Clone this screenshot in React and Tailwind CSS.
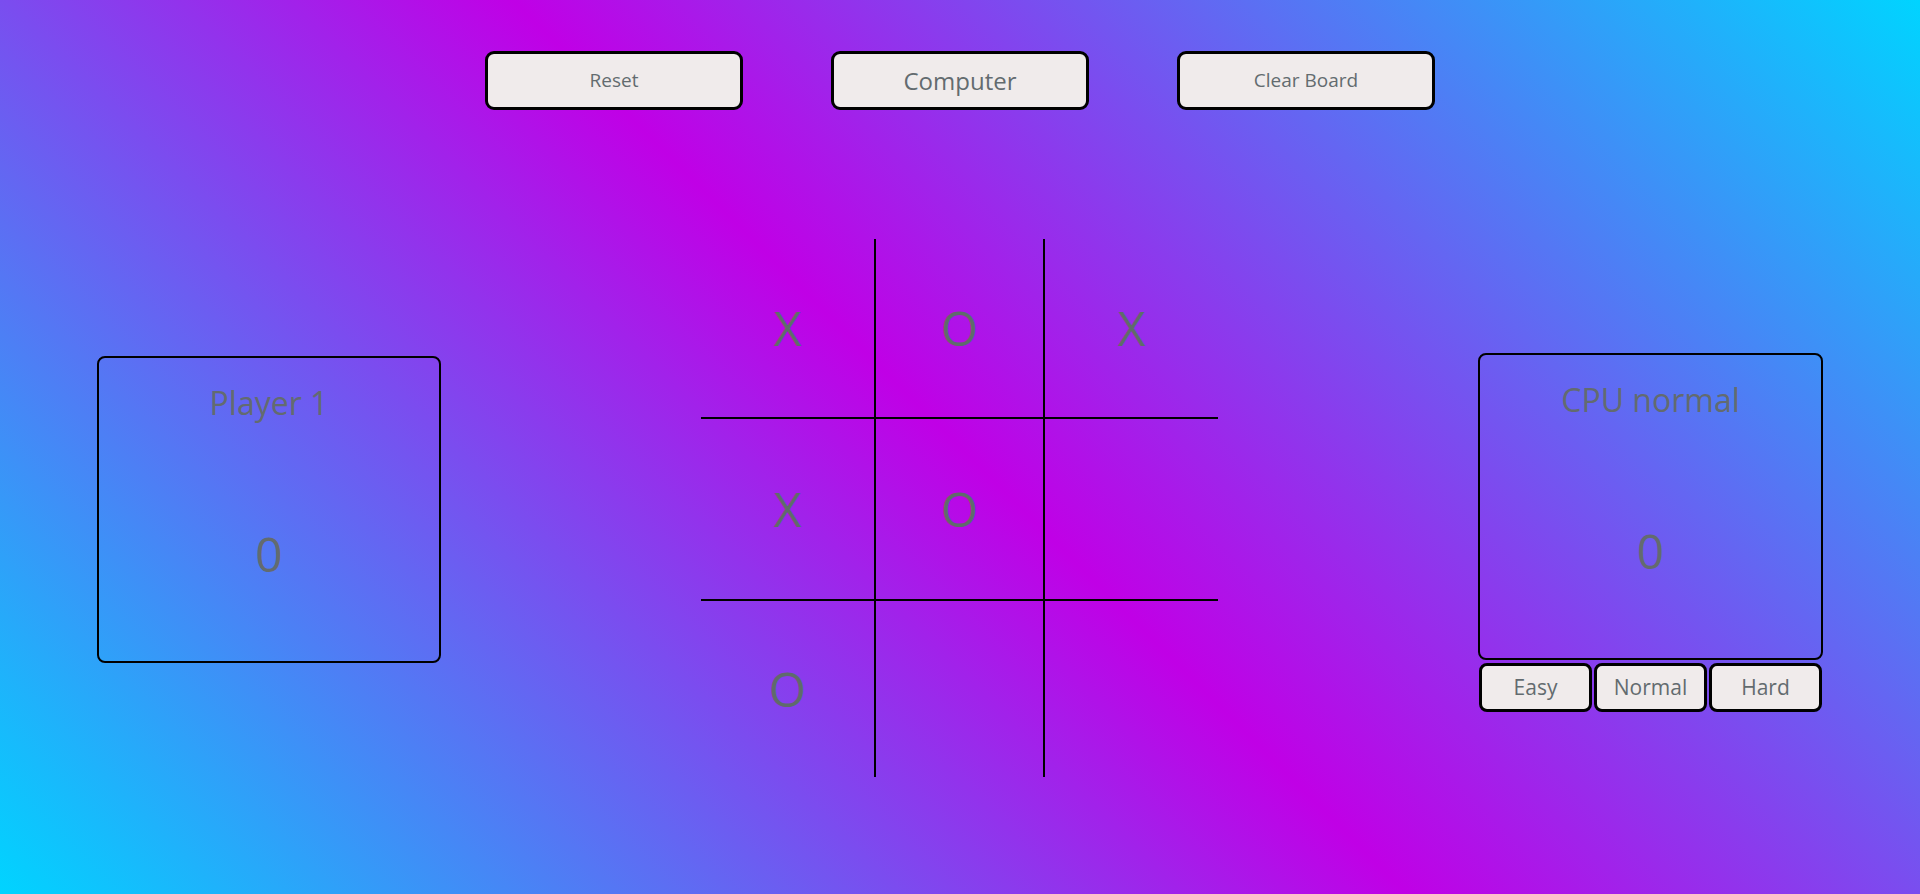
const board = [
  ["X", "O", "X"],
  ["X", "O", ""],
  ["O", "", ""],
]

function TopButton({ children, big }) {
  return (
    <button
      className={
        "w-[258px] h-[59px] rounded-[9px] border-[3px] border-black bg-[#f0ebeb] text-[#636b6f] " +
        (big ? "text-[24px]" : "text-[19px]")
      }
    >
      {children}
    </button>
  )
}

function ScoreBox({ title, score }) {
  return (
    <div className="flex flex-col items-center rounded-[8px] border-2 border-black h-[307px] pt-[26px] text-[#636b6f]">
      <div className="text-[32px] leading-[38px]">{title}</div>
      <div className="mt-[104px] text-[48px] leading-[56px]">{score}</div>
    </div>
  )
}

export default function App() {
  return (
    <div
      className="h-screen w-full overflow-hidden bg-[linear-gradient(45deg,#00d4ff_0%,#c000e6_50%,#00d4ff_100%)]"
      style={{ fontFamily: '"Open Sans", "Noto Sans", sans-serif' }}
    >
      <div className="flex justify-center gap-[88px] pt-[51px]">
        <TopButton>Reset</TopButton>
        <TopButton big>Computer</TopButton>
        <TopButton>Clear Board</TopButton>
      </div>

      <div className="flex items-start justify-between px-[97px] mt-[129px]">
        <div className="w-[344px] mt-[117px]">
          <ScoreBox title="Player 1" score="0" />
        </div>

        <div className="grid grid-cols-[173px_171px_173px] grid-rows-[178px_184px_176px]">
          {board.map((row, r) =>
            row.map((cell, c) => (
              <div
                key={r + "-" + c}
                className={
                  "flex items-center justify-center text-[48px] text-[#5f6b6b] " +
                  (c === 1 ? "border-x-2 border-black " : "") +
                  (r === 1 ? "border-y-2 border-black" : "")
                }
              >
                {cell}
              </div>
            ))
          )}
        </div>

        <div className="w-[345px] mt-[114px]">
          <ScoreBox title="CPU normal" score="0" />
          <div className="grid grid-cols-3 gap-[2px] mt-[3px] px-[1px]">
            {["Easy", "Normal", "Hard"].map((d) => (
              <button
                key={d}
                className="h-[49px] rounded-[8px] border-[3px] border-black bg-[#f0ebeb] text-[21px] text-[#636b6f]"
              >
                {d}
              </button>
            ))}
          </div>
        </div>
      </div>
    </div>
  )
}
